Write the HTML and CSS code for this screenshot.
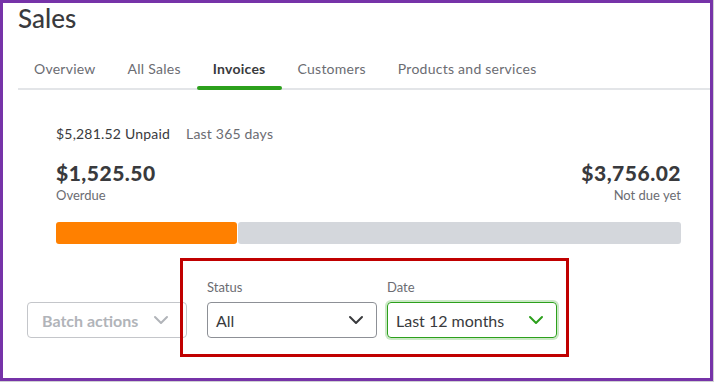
FILE: index.html
```html
<!DOCTYPE html>
<html lang="en">
<head>
  <meta charset="UTF-8" />
  <meta name="viewport" content="width=device-width, initial-scale=1.0"/>
  <title>Sales</title>
  <link rel="stylesheet" href="styles.css">
</head>
<body>
  <div class="frame">
    <h1 class="title">Sales</h1>

    <nav class="tabs">
      <a class="tab">Overview</a>
      <a class="tab">All Sales</a>
      <a class="tab active">Invoices</a>
      <a class="tab">Customers</a>
      <a class="tab">Products and services</a>
    </nav>

    <div class="content">
      <div class="summary">
        <div class="unpaid"><span class="unpaid-total">$5,281.52 Unpaid</span><span class="period">Last 365 days</span></div>

        <div class="amounts">
          <div class="amount">
            <div class="amount-value">$1,525.50</div>
            <div class="amount-label">Overdue</div>
          </div>
          <div class="amount right">
            <div class="amount-value">$3,756.02</div>
            <div class="amount-label">Not due yet</div>
          </div>
        </div>

        <div class="bar">
          <div class="bar-overdue"></div>
          <div class="bar-rest"></div>
        </div>
      </div>

      <div class="filters">
        <button class="batch">Batch actions
          <svg class="chevron" width="16" height="10" viewBox="0 0 16 10"><path d="M2 2l6 6 6-6" fill="none" stroke="currentColor" stroke-width="2" stroke-linecap="round" stroke-linejoin="round"/></svg>
        </button>

        <div class="field">
          <label>Status</label>
          <div class="select">All
            <svg class="chevron" width="16" height="10" viewBox="0 0 16 10"><path d="M2 2l6 6 6-6" fill="none" stroke="currentColor" stroke-width="2" stroke-linecap="round" stroke-linejoin="round"/></svg>
          </div>
        </div>

        <div class="field">
          <label>Date</label>
          <div class="select focused">Last 12 months
            <svg class="chevron" width="16" height="10" viewBox="0 0 16 10"><path d="M2 2l6 6 6-6" fill="none" stroke="currentColor" stroke-width="2" stroke-linecap="round" stroke-linejoin="round"/></svg>
          </div>
        </div>
      </div>
    </div>

    <div class="highlight"></div>
  </div>
</body>
</html>
```

FILE: styles.css
```css
:root {
  --text: #393a3d;
  --muted: #6b6c72;
  --green: #2ca01c;
  --purple: #7633a8;
}
* {
  box-sizing: border-box;
}
body {
  margin: 0;
  background-color: #cfd0d3;
  font-family: 'Lato', 'Noto Sans', sans-serif;
  color: var(--text);
}
.frame {
  position: relative;
  width: 713px;
  height: 381px;
  background-color: #fff;
  border: 3px solid var(--purple);
}
.title {
  margin: 0 0 0 15px;
  font-size: 26px;
  font-weight: 500;
  line-height: 30px;
}
.tabs {
  display: flex;
  margin: 17px 0 0 15px;
  border-bottom: 2px solid #e3e5e8;
}
.tab {
  position: relative;
  padding: 9px 16px 9px;
  font-size: 14px;
  line-height: 20px;
  letter-spacing: 0.25px;
  color: var(--muted);
}
.tab.active {
  font-weight: bold;
  color: var(--text);
}
.tab.active::after {
  content: "";
  position: absolute;
  left: 0;
  right: 0;
  bottom: -2px;
  height: 4px;
  border-radius: 2px;
  background-color: var(--green);
}
.content {
  padding-left: 24px;
}
.summary {
  padding: 35px 29px 0;
}
.unpaid {
  font-size: 14px;
  line-height: 18px;
  letter-spacing: 0.2px;
}
.period {
  margin-left: 16px;
  color: var(--muted);
}
.amounts {
  display: flex;
  justify-content: space-between;
  margin-top: 17px;
}
.amount.right {
  text-align: right;
}
.amount-value {
  font-size: 21px;
  font-weight: 900;
  line-height: 26px;
  letter-spacing: 0.5px;
}
.amount-label {
  font-size: 13px;
  line-height: 18px;
  color: var(--muted);
}
.bar {
  display: flex;
  gap: 1px;
  height: 22px;
  margin-top: 18px;
}
.bar-overdue {
  width: 181px;
  background-color: #ff8000;
  border-radius: 3px;
}
.bar-rest {
  flex: 1;
  background-color: #d4d7dc;
  border-radius: 3px;
}
.filters {
  display: flex;
  align-items: flex-end;
  margin-top: 34px;
}
.batch {
  display: flex;
  align-items: center;
  justify-content: space-between;
  width: 160px;
  height: 36px;
  padding: 0 17px 0 14px;
  margin-right: 20px;
  background-color: #fff;
  border: 1px solid #c4c6ca;
  border-radius: 4px;
  font-family: inherit;
  font-size: 16px;
  font-weight: bold;
  color: #b1b4b9;
}
.field {
  display: flex;
  flex-direction: column;
  margin-right: 10px;
}
.field label {
  font-size: 13px;
  line-height: 18px;
  margin-bottom: 6px;
  color: var(--muted);
}
.select {
  display: flex;
  align-items: center;
  justify-content: space-between;
  width: 170px;
  height: 36px;
  padding: 0 12px 0 8px;
  border: 1px solid #8d9096;
  border-radius: 4px;
  font-size: 16px;
}
.select .chevron {
  color: var(--text);
}
.select.focused {
  border-color: var(--green);
  box-shadow: 0 0 0 2px #cbe9c6;
}
.select.focused .chevron {
  color: var(--green);
}
.highlight {
  position: absolute;
  left: 177px;
  top: 255px;
  width: 389px;
  height: 99px;
  border: 3px solid #c00000;
}
```
